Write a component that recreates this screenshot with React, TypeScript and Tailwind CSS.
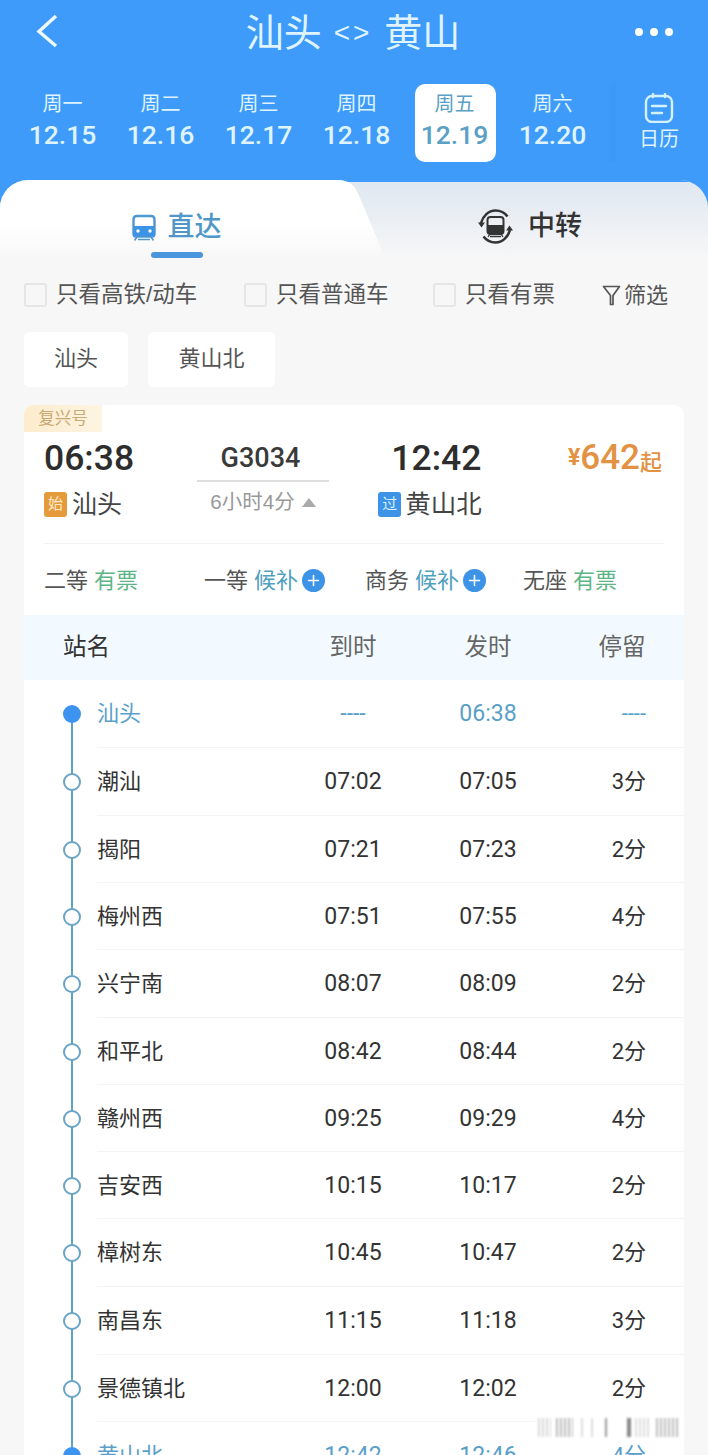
import { Plus } from "lucide-react";

const days = [
  { w: "周一", d: "12.15" },
  { w: "周二", d: "12.16" },
  { w: "周三", d: "12.17" },
  { w: "周四", d: "12.18" },
  { w: "周五", d: "12.19", active: true },
  { w: "周六", d: "12.20" },
];

const stops = [
  { name: "汕头", arr: "----", dep: "06:38", stay: "----", end: true, h: "h-[68px]" },
  { name: "潮汕", arr: "07:02", dep: "07:05", stay: "3分", h: "h-[68px]" },
  { name: "揭阳", arr: "07:21", dep: "07:23", stay: "2分", h: "h-[67px]" },
  { name: "梅州西", arr: "07:51", dep: "07:55", stay: "4分", h: "h-[67px]" },
  { name: "兴宁南", arr: "08:07", dep: "08:09", stay: "2分", h: "h-[68px]" },
  { name: "和平北", arr: "08:42", dep: "08:44", stay: "2分", h: "h-[67px]" },
  { name: "赣州西", arr: "09:25", dep: "09:29", stay: "4分", h: "h-[67px]" },
  { name: "吉安西", arr: "10:15", dep: "10:17", stay: "2分", h: "h-[67px]" },
  { name: "樟树东", arr: "10:45", dep: "10:47", stay: "2分", h: "h-[68px]" },
  { name: "南昌东", arr: "11:15", dep: "11:18", stay: "3分", h: "h-[68px]" },
  { name: "景德镇北", arr: "12:00", dep: "12:02", stay: "2分", h: "h-[67px]" },
  { name: "黄山北", arr: "12:42", dep: "12:46", stay: "4分", end: true, h: "h-[67px]" },
];

const seats = [
  { c: "二等", s: "有票", w: "w-[160px]" },
  { c: "一等", s: "候补", wait: true, w: "w-[161px]" },
  { c: "商务", s: "候补", wait: true, w: "w-[158px]" },
  { c: "无座", s: "有票", w: "w-auto" },
];

// smeared watermark at the bottom right of the screenshot
const smear = [
  { x: "w-[13px]", c: "bg-[repeating-linear-gradient(90deg,#d8d8d8_0_2px,#ffffff_2px_4px)]", g: "ml-[3px]" },
  { x: "w-[17px]", c: "bg-[repeating-linear-gradient(90deg,#bbbbbb_0_2px,#ffffff_2px_4px)]", g: "ml-[5px]" },
  { x: "w-[14px]", c: "bg-[repeating-linear-gradient(90deg,#dddddd_0_2px,#ffffff_2px_10px)]", g: "ml-[8px]" },
  { x: "w-[2px]", c: "bg-[#999]", g: "ml-[10px]" },
  { x: "w-[4px]", c: "bg-[#888]", g: "ml-[20px]" },
  { x: "w-[16px]", c: "bg-[repeating-linear-gradient(90deg,#dddddd_0_2px,#ffffff_2px_4px)]", g: "ml-[4px]" },
  { x: "w-[22px]", c: "bg-[repeating-linear-gradient(90deg,#bdbdbd_0_2px,#ffffff_2px_4px)]", g: "ml-[5px]" },
];

function TrainIcon() {
  return (
    <svg width="26" height="27" viewBox="0 0 26 27" fill="none">
      <path d="M6 2h14c2 0 3.500 1.500 3.500 3.500V20c0 1.500-1 2.500-2.500 2.500H5c-1.500 0-2.500-1-2.500-2.500V5.500C2.500 3.500 4 2 6 2z" stroke="#4f97cf" strokeWidth="2.400" />
      <path d="M2.500 12h21v8c0 1.500-1 2.500-2.500 2.500H5c-1.500 0-2.500-1-2.500-2.500z" fill="#3d93e6" />
      <circle cx="7" cy="17" r="1.700" fill="#fff" />
      <circle cx="19" cy="17" r="1.700" fill="#fff" />
      <path d="M6 23l-2.500 3.500M20 23l2.500 3.500M7 25.500h12" stroke="#4f97cf" strokeWidth="1.600" />
    </svg>
  );
}

function TransferIcon() {
  return (
    <svg width="37" height="37" viewBox="0 0 37 37" fill="none">
      <path d="M4 15C6 8 11.500 2.500 18.500 2.500c5 0 9 2 12 6" stroke="#333" strokeWidth="2.600" />
      <path d="M33 22c-2 7-7.500 12.500-14.500 12.500-5 0-9-2-12-6" stroke="#333" strokeWidth="2.600" />
      <path d="M1 14.500h7l-3.500 5zM36 22.500h-7l3.500-5z" fill="#333" />
      <rect x="10.500" y="9" width="16" height="17" rx="3" stroke="#333" strokeWidth="2" />
      <path d="M10.500 17h16v6c0 2-1 3-3 3h-10c-2 0-3-1-3-3z" fill="#333" />
      <path d="M13 26l-2 3M24 26l2 3M13 28.500h11" stroke="#333" strokeWidth="1.300" />
    </svg>
  );
}

function CalendarIcon() {
  return (
    <svg width="30" height="30" viewBox="0 0 30 30" fill="none" stroke="#d4f1ff" strokeWidth="2.400">
      <rect x="2" y="3" width="26" height="26" rx="6" />
      <path d="M9 1v3M21 1v3M8 13h14M8 20h10" strokeLinecap="round" />
    </svg>
  );
}

function FilterIcon() {
  return (
    <svg width="19" height="21" viewBox="0 0 19 21" fill="none" stroke="#555" strokeWidth="1.700" strokeLinejoin="round">
      <path d="M1.500 1.500h16L11 10.500V19.500H8.500V10.500z" />
    </svg>
  );
}

function Box({ label, className }: { label: string; className: string }) {
  return (
    <div className={`flex items-center ${className}`}>
      <span className="h-[24px] w-[23px] rounded-[3px] border-2 border-[#e6e6e6]" />
      <span className="ml-[9px] text-[22.500px] leading-[30px] text-[#555]">{label}</span>
    </div>
  );
}

function Stop({ s, first, last }: { s: (typeof stops)[number]; first: boolean; last: boolean }) {
  const color = s.end ? "text-[#5a9fc9]" : "text-[#333]";
  return (
    <div className={`flex ${s.h}`}>
      <div className="relative flex w-[73px] shrink-0 items-center pl-[39px]">
        <span className={`absolute left-[47px] w-[2px] bg-[#5ba4c4] ${first ? "bottom-0 top-1/2" : last ? "top-0 h-1/2" : "inset-y-0"}`} />
        <span className={`relative h-[18px] w-[18px] rounded-full ${s.end ? "bg-[#3d93f0]" : "border-2 border-[#6aa3c4] bg-white"}`} />
      </div>
      <div className={`flex min-w-0 flex-1 items-center border-b border-[#f4f4f4] text-[22px] ${color}`}>
        <span className="w-[202px] shrink-0">{s.name}</span>
        <span className="w-[108px] shrink-0 pt-[2px] text-center font-['Roboto',sans-serif] text-[23px]">{s.arr}</span>
        <span className="ml-[27px] w-[108px] shrink-0 pt-[2px] text-center font-['Roboto',sans-serif] text-[23px]">{s.dep}</span>
        <span className="ml-[27px] w-[77px] shrink-0 text-right font-['Roboto','Noto_Sans_CJK_SC',sans-serif] text-[22px]">{s.stay}</span>
      </div>
    </div>
  );
}

export default function App() {
  return (
    <div className="relative h-[1455px] w-[708px] overflow-hidden bg-[#f7f7f7] font-['Liberation_Sans','Noto_Sans_CJK_SC',sans-serif] text-[#333]">
      <div className="h-[180px] bg-[#3e9bfa] text-[#dff4ff]">
        <div className="flex h-[66px] items-center justify-between pl-[36px] pr-[35px]">
          <svg width="22" height="34" viewBox="0 0 22 34" fill="none" stroke="#f0f9ff" strokeWidth="3.400" className="-mt-[4px]">
            <path d="M20 2L3 17.500 20 32" />
          </svg>
          <h1 className="ml-[13px] flex items-center text-[38px] font-normal leading-none">
            汕头
            <span className="ml-[12px] mr-[12px] font-['Liberation_Sans',sans-serif] text-[28px] tracking-[3px]">&lt;&gt;</span>
            黄山
          </h1>
          <div className="-mt-[2px] flex gap-[7px]">
            <span className="h-[8px] w-[8px] rounded-full bg-white" />
            <span className="h-[8px] w-[8px] rounded-full bg-white" />
            <span className="h-[8px] w-[8px] rounded-full bg-white" />
          </div>
        </div>
        <div className="mt-[18px] flex pl-[22px]">
          {days.map((x) => (
            <div
              key={x.d}
              className={`flex h-[78px] w-[81px] flex-col items-center rounded-[10px] ${x.active ? "ml-[1px] mr-[16px] bg-white pr-[2px] text-[#5a9fc4]" : "mr-[17px]"}`}
            >
              <span className="mt-[8px] text-[20px] leading-[24px]">{x.w}</span>
              <span className="mt-[2px] font-['Roboto',sans-serif] text-[26.500px] font-medium leading-[34px]">{x.d}</span>
            </div>
          ))}
          <span className="h-[78px] w-[6px] bg-[#3c99f8]" />
          <div className="flex w-[86px] flex-col items-center pt-[9px]">
            <CalendarIcon />
            <span className="mt-[3px] text-[20px] leading-[26px]">日历</span>
          </div>
        </div>
      </div>

      <div className="bg-[#3e9bfa]">
        <div className="relative h-[80px] overflow-hidden rounded-t-[28px] bg-gradient-to-b from-[#dfe7f1] to-[#f7f7f7]">
          <div className="absolute inset-x-0 top-0 h-[2px] bg-[#3e9bfa]" />
          <svg className="absolute left-0 top-0" width="400" height="80" viewBox="0 0 400 80">
            <defs>
              <linearGradient id="tab" x1="0" y1="0" x2="0" y2="1">
                <stop offset="0.550" stopColor="#ffffff" />
                <stop offset="1" stopColor="#f7f7f7" />
              </linearGradient>
            </defs>
            <path d="M0 0H338C350 0 356 6 360 18L386 80H0z" fill="url(#tab)" />
          </svg>
          <div className="relative flex h-full">
            <div className="flex w-[354px] flex-col items-center">
              <div className="-ml-[2px] mt-[30px] flex h-[34px] items-center gap-[11px]">
                <TrainIcon />
                <span className="text-[27px] font-medium leading-none text-[#4f97c9]">直达</span>
              </div>
              <span className="mt-[8px] h-[6px] w-[52px] rounded-full bg-[#4a96dc]" />
            </div>
            <div className="ml-[123px] mt-[28px] flex h-[37px] items-center gap-[14px]">
              <TransferIcon />
              <span className="text-[27px] font-medium leading-none text-[#333]">中转</span>
            </div>
          </div>
        </div>
      </div>

      <div className="mt-[20px] flex h-[30px] items-center pl-[24px]">
        <Box label="只看高铁/动车" className="w-[220px]" />
        <Box label="只看普通车" className="w-[189px]" />
        <Box label="只看有票" className="w-[169px]" />
        <FilterIcon />
        <span className="ml-[3px] text-[22px] text-[#555]">筛选</span>
      </div>

      <div className="ml-[24px] mt-[22px] flex gap-[20px] text-[22px] text-[#555]">
        <span className="flex h-[55px] w-[104px] items-center justify-center rounded-[6px] bg-white pb-[3px]">汕头</span>
        <span className="flex h-[55px] w-[127px] items-center justify-center rounded-[6px] bg-white pb-[3px]">黄山北</span>
      </div>

      <div className="ml-[24px] mt-[18px] w-[660px] rounded-t-[10px] bg-white">
        <div className="h-[27px] w-[78px] rounded-tl-[10px] bg-gradient-to-r from-[#fdeccd] to-[#fdf4e2] text-center text-[16.500px] leading-[27px] text-[#c9a873]">
          复兴号
        </div>
        <div className="flex px-[20px] pt-[2px]">
          <div className="w-[153px]">
            <div className="font-['Roboto',sans-serif] text-[35.500px] font-medium leading-[48px] text-[#2d2d2d]">06:38</div>
            <div className="mt-[4px] flex items-center gap-[5px]">
              <span className="flex h-[25px] w-[23px] items-center justify-center rounded-[3px] bg-[#e59a3c] text-[15px] text-[#fde9c8]">始</span>
              <span className="text-[25px] leading-[36px] text-[#444]">汕头</span>
            </div>
          </div>
          <div className="w-[133px]">
            <div className="flex h-[48px] items-center justify-center border-b-2 border-[#dedede] pr-[5px] pt-[3px] font-['Roboto',sans-serif] text-[27px] font-medium text-[#3a3a3a]">
              G3034
            </div>
            <div className="mt-[5px] flex items-center justify-center gap-[7px] text-[20.500px] leading-[30px] text-[#999]">
              6小时4分
              <span className="h-0 w-0 border-x-[7px] border-b-[9px] border-x-transparent border-b-[#aaa]" />
            </div>
          </div>
          <div className="ml-[49px] w-[190px]">
            <div className="ml-[13px] font-['Roboto',sans-serif] text-[35.500px] font-medium leading-[48px] text-[#2d2d2d]">12:42</div>
            <div className="mt-[4px] flex items-center gap-[4px]">
              <span className="flex h-[25px] w-[23px] items-center justify-center rounded-[3px] bg-[#3d93e6] text-[15px] text-[#d9efff]">过</span>
              <span className="text-[25.500px] leading-[36px] text-[#444]">黄山北</span>
            </div>
          </div>
          <div className="flex h-[48px] flex-1 items-center justify-end pr-[2px] font-['Roboto',sans-serif] font-medium text-[#e39243]">
            <span className="text-[23px] font-bold">¥</span>
            <span className="text-[35px]">642</span>
            <span className="mt-[4px] font-['Noto_Sans_CJK_SC',sans-serif] text-[22px]">起</span>
          </div>
        </div>
        <div className="mx-[20px] mt-[21px] border-t border-[#f2f2f2]" />
        <div className="flex h-[71px] items-center pl-[20px] pt-[1px] text-[22px]">
          {seats.map((x, i) => (
            <div key={i} className={`flex items-center ${x.w}`}>
              <span className="text-[#555]">{x.c}</span>
              <span className={`ml-[6px] ${x.wait ? "text-[#4f9fbf]" : "text-[#5cb585]"}`}>{x.s}</span>
              {x.wait && (
                <span className="ml-[4px] flex h-[23px] w-[23px] items-center justify-center rounded-full bg-[#3d93e6]">
                  <Plus size={17} strokeWidth={2.200} className="text-white" />
                </span>
              )}
            </div>
          ))}
        </div>

        <div className="flex h-[65px] items-center bg-[#f3faff] pl-[39px] text-[23.500px] text-[#666]">
          <span className="w-[236px] text-[#333]">站名</span>
          <span className="w-[108px] text-center">到时</span>
          <span className="ml-[27px] w-[108px] text-center">发时</span>
          <span className="ml-[27px] w-[106px] text-center">停留</span>
        </div>

        {stops.map((s, i) => (
          <Stop key={s.name} s={s} first={i === 0} last={i === stops.length - 1} />
        ))}
      </div>

      <div className="absolute left-[535px] top-[1418px] flex h-[22px] w-[149px] bg-white blur-[1px]">
        {smear.map((b, i) => (
          <span key={i} className={`h-[19px] ${b.x} ${b.c} ${b.g}`} />
        ))}
      </div>
    </div>
  );
}
